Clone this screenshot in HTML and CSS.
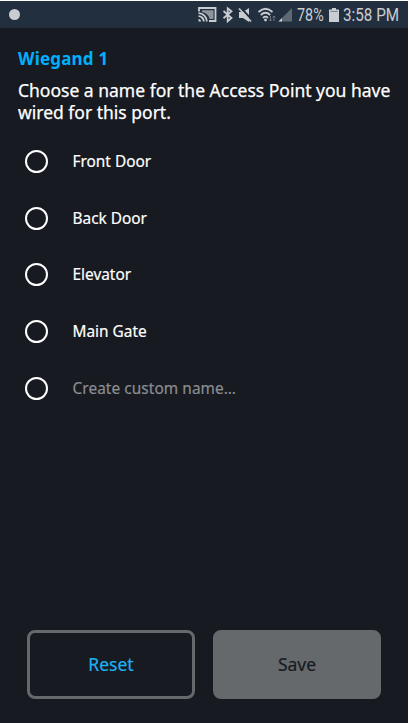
FILE: index.html
```html
<!DOCTYPE html>
<html lang="en">
<head>
  <meta charset="UTF-8">
  <title>Wiegand 1</title>
  <link rel="stylesheet" href="styles.css">
</head>
<body>
  <div class="screen">
    <div class="status-bar">
      <span class="notification-dot"></span>
      <svg class="status-icons" width="96" height="20" viewBox="197 5 96 20">
        <!-- cast -->
        <path d="M199 11.500V8h16.500v13H209" fill="none" stroke="#c9ccd1" stroke-width="1.800"/>
        <path d="M202 10.300h11.500v8.700h-4q-1-5.500-7.500-7z" fill="#8d949c"/>
        <path d="M198.500 13.200a8.300 8.300 0 0 1 8.300 8.300M198.500 16.200a5.300 5.300 0 0 1 5.300 5.300" fill="none" stroke="#c9ccd1" stroke-width="1.800"/>
        <path d="M198.500 19v2.500h2.500a2.500 2.500 0 0 0-2.500-2.500z" fill="#c9ccd1"/>
        <!-- bluetooth -->
        <path d="M223.500 11l8 7-3.800 3.200V8.300l3.800 3-8 7" fill="none" stroke="#c9ccd1" stroke-width="1.800"/>
        <!-- muted -->
        <path d="M239 12h4l6-4v14l-6-4h-4z" fill="#c9ccd1"/>
        <path d="M240.500 7.500l12 13" stroke="#222f3e" stroke-width="2"/>
        <path d="M239 8.500l12 13" stroke="#c9ccd1" stroke-width="1.700"/>
        <!-- wifi -->
        <path d="M258.500 12q7-6.500 14 0M260.800 15q4.700-4.400 9.400 0M263 17.800q2.500-2.300 5 0" fill="none" stroke="#c9ccd1" stroke-width="1.800"/>
        <circle cx="265.500" cy="20" r="1.400" fill="#c9ccd1"/>
        <path d="M270.500 16v5M269 19.500l1.500 1.500 1.500-1.500M274 21v-5M272.500 17.500l1.500-1.500 1.500 1.500" fill="none" stroke="#6b7580"/>
        <!-- signal -->
        <path d="M292 8v13.500h-13.500z" fill="#5f6974"/>
        <path d="M282 18v3.500h-3.500z" fill="#c9ccd1"/>
      </svg>
      <span class="battery-level">78%</span>
      <svg class="battery-icon" width="10" height="14" viewBox="0 0 10 14">
        <path d="M3 0h4v1.500h3V14H0V1.500h3z" fill="#c9ccd1"/>
        <path d="M1.500 3.500h7" stroke="#7b838d"/>
      </svg>
      <span class="clock">3:58 PM</span>
    </div>

    <div class="content">
      <h1>Wiegand 1</h1>
      <p class="prompt"><span class="line">Choose a name for the Access Point you have</span> <span class="line">wired for this port.</span></p>
      <div class="options">
        <label class="option"><input type="radio" name="port"><span>Front Door</span></label>
        <label class="option"><input type="radio" name="port"><span>Back Door</span></label>
        <label class="option"><input type="radio" name="port"><span>Elevator</span></label>
        <label class="option"><input type="radio" name="port"><span>Main Gate</span></label>
        <label class="option custom"><input type="radio" name="port"><span>Create custom name…</span></label>
      </div>
    </div>

    <div class="actions">
      <button class="reset">Reset</button>
      <button class="save">Save</button>
    </div>
  </div>
</body>
</html>
```

FILE: styles.css
```css
* {
  box-sizing: border-box;
}

body {
  margin: 0;
  background: #fff;
  font-family: "Noto Sans", sans-serif;
}

.screen {
  display: flex;
  flex-direction: column;
  width: 408px;
  height: 722px;
  margin-top: 1px;
  background: #171a21;
  color: #fff;
}

.status-bar {
  display: flex;
  align-items: center;
  height: 27px;
  padding-left: 9px;
  background: #222f3e;
  color: #c9ccd1;
  font: 17.5px/27px Roboto, sans-serif;
  white-space: nowrap;
}

.notification-dot {
  width: 11px;
  height: 11px;
  border-radius: 50%;
  background: #c9ccd1;
}

.status-icons {
  margin-left: 177px;
}

.battery-level {
  width: 28px;
  margin-left: 4px;
  padding-top: 2px;
  transform: scaleX(0.82);
  transform-origin: left;
}

.battery-icon {
  margin-left: 4px;
}

.clock {
  margin-left: 4px;
  padding-top: 2px;
  transform: scaleX(0.87);
  transform-origin: left;
}

.content {
  flex: 1;
  padding: 20px 18px 0;
}

h1 {
  margin: 0;
  color: #00b0ff;
  font-size: 17px;
  line-height: 22px;
  font-weight: 700;
  letter-spacing: 0.2px;
}

.prompt {
  margin: 9px 0 0;
  font-size: 17.5px;
  line-height: 22px;
  -webkit-text-stroke: 0.25px;
}

.line {
  display: block;
  white-space: nowrap;
}

.options {
  margin-top: 10px;
}

.option {
  display: flex;
  align-items: center;
  height: 56.7px;
  padding-left: 7px;
  font-size: 15.4px;
  -webkit-text-stroke: 0.2px;
}

.option input {
  appearance: none;
  width: 23px;
  height: 23px;
  margin: 0 24.5px 0 0;
  border: 2.5px solid #fff;
  border-radius: 50%;
}

.custom {
  color: #8b8d90;
  letter-spacing: 0.07px;
}

.actions {
  display: flex;
  gap: 18px;
  padding: 0 27px 24px;
}

button {
  flex: 1;
  height: 69px;
  padding: 0 0 1px;
  border: 3px solid #65696c;
  border-radius: 8px;
  font: 17.5px "Noto Sans", sans-serif;
  -webkit-text-stroke: 0.2px;
}

.reset {
  background: transparent;
  color: #1fb0ef;
}

.save {
  background: #65696c;
  color: #171a21;
}
```
